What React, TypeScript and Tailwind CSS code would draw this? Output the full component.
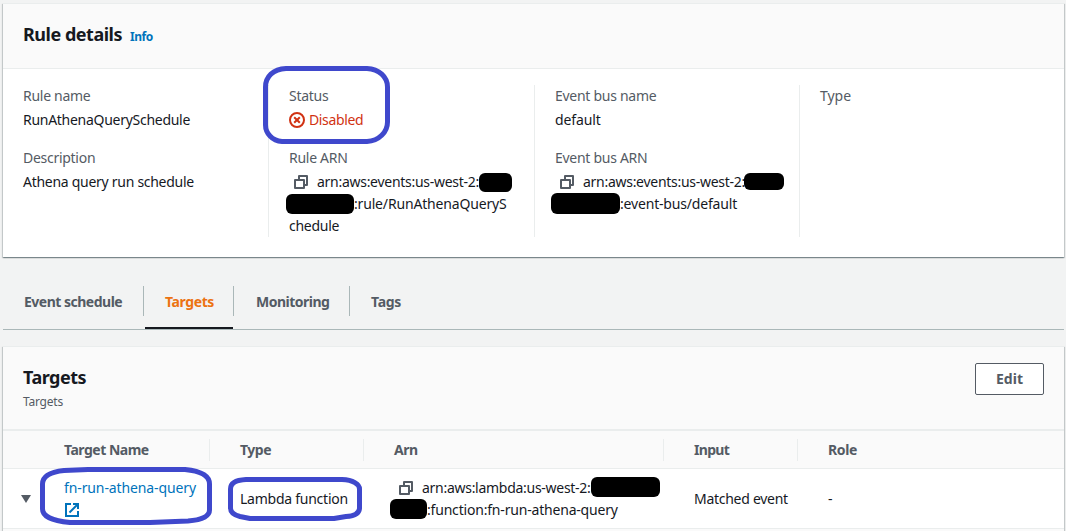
import type { ReactNode } from "react";

function CopyIcon({ className = "" }: { className?: string }) {
  return (
    <svg viewBox="0 0 16 16" className={`inline-block h-4 w-4 shrink-0 ${className}`} fill="none" stroke="#545b64" strokeWidth="2" strokeLinejoin="round">
      <path d="M2 6h9v8H2z" />
      <path d="M6 5V2h8v9h-3" />
    </svg>
  );
}

function ExternalIcon() {
  return (
    <svg viewBox="0 0 16 16" className="h-4 w-4" fill="none" stroke="#0073bb" strokeWidth="2">
      <path d="M7 2H2v12h12V9" />
      <path d="M9 2h5v5" />
      <path d="M5.500 10.500l8-8" />
    </svg>
  );
}

function DisabledIcon() {
  return (
    <svg viewBox="0 0 16 16" className="h-4 w-4 shrink-0" fill="none" stroke="#d13212" strokeWidth="2">
      <circle cx="8" cy="8" r="7" />
      <path d="M5.2 5.2l5.6 5.6M10.8 5.2l-5.6 5.6" />
    </svg>
  );
}

function Redaction({ className }: { className: string }) {
  return <span className={`absolute rounded-[6px] bg-black ${className}`} />;
}

function Field({ label, children }: { label: string; children?: ReactNode }) {
  return (
    <div>
      <div className="text-[#545b64]">{label}</div>
      <div className="mt-0.5">{children}</div>
    </div>
  );
}

function Marker({ className, box, d }: { className: string; box: string; d: string }) {
  return (
    <svg viewBox={box} className={`pointer-events-none absolute ${className}`} fill="none" stroke="#3f48cc" strokeWidth="5" strokeLinejoin="round">
      <path d={d} />
    </svg>
  );
}

function Tab({ children, className }: { children: string; className: string }) {
  return <div className={`flex h-[31px] items-center font-bold ${className}`}>{children}</div>;
}

function TabDivider() {
  return <div className="h-[30px] w-px bg-[#aab7b8]" />;
}

const cardShadow = "shadow-[0_1px_1px_0_rgba(0,28,36,0.3),1px_1px_1px_0_rgba(0,28,36,0.15),-1px_1px_1px_0_rgba(0,28,36,0.15)]";

export default function App() {
  return (
    <div className="relative h-[531px] w-[1066px] overflow-hidden whitespace-nowrap bg-[#f2f3f3] pl-[3px] pr-0.5 font-['Noto_Sans',sans-serif] text-[14px] leading-[22px] tracking-[-0.28px] text-[#16191f]">
      <section className={`mt-[3px] h-[254px] w-[1061px] border-t border-[#eaeded] bg-white ${cardShadow}`}>
        <header className="flex h-[65px] items-center border-b border-[#eaeded] bg-[#fafafa] pl-5">
          <h2 className="-translate-y-0.5 text-[18px] font-bold tracking-[-0.48px]">Rule details</h2>
          <span className="ml-2 translate-y-px text-[12px] font-bold tracking-[-0.5px] text-[#0073bb]">Info</span>
        </header>
        <div className="flex pt-4">
          <div className="flex h-[152px] w-[265px] flex-col gap-4 pl-5">
            <Field label="Rule name">RunAthenaQuerySchedule</Field>
            <Field label="Description">Athena query run schedule</Field>
          </div>
          <div className="flex h-[152px] w-[266px] flex-col gap-4 border-l border-[#eaeded] pl-5">
            <Field label="Status">
              <span className="flex items-center gap-1 text-[#d13212]">
                <DisabledIcon />
                <span className="tracking-[-0.36px]">Disabled</span>
              </span>
            </Field>
            <Field label="Rule ARN">
              <div className="relative">
                <div className="flex items-center pl-1"><CopyIcon className="mr-2" />arn:aws:events:us-west-2:</div>
                <div className="pl-[65px] tracking-[-0.17px]">:rule/RunAthenaQueryS</div>
                <div>chedule</div>
                <Redaction className="left-[190px] top-[2px] h-[19px] w-[33px]" />
                <Redaction className="left-[-3px] top-[23px] h-[20px] w-[68px]" />
              </div>
            </Field>
          </div>
          <div className="flex h-[152px] w-[265px] flex-col gap-4 border-l border-[#eaeded] pl-5">
            <Field label="Event bus name"><span className="tracking-[-0.1px]">default</span></Field>
            <Field label="Event bus ARN">
              <div className="relative">
                <div className="flex items-center pl-1"><CopyIcon className="mr-2" />arn:aws:events:us-west-2:</div>
                <div className="pl-[65px] tracking-[-0.18px]">:event-bus/default</div>
                <Redaction className="left-[189px] top-[2px] h-[17px] w-[40px]" />
                <Redaction className="left-[-4px] top-[22px] h-[21px] w-[69px]" />
              </div>
            </Field>
          </div>
          <div className="h-[152px] border-l border-[#eaeded] pl-5 tracking-[-0.04px]">
            <Field label="Type" />
          </div>
        </div>
      </section>

      <nav className="mt-[29px] flex h-[44px] w-[1061px] border-b border-[#aab7b8] tracking-[-0.5px] text-[#545b64]">
        <Tab className="w-[140px] pl-[21px]">Event schedule</Tab>
        <TabDivider />
        <div className="ml-px flex h-[43px] w-[88px] flex-col border-b-2 border-[#16191f]">
          <Tab className="pl-5 tracking-[-0.4px] text-[#ec7211]">Targets</Tab>
        </div>
        <TabDivider />
        <Tab className="w-[115px] pl-[22px]">Monitoring</Tab>
        <TabDivider />
        <Tab className="pl-[21px] tracking-[-0.31px]">Tags</Tab>
      </nav>

      <section className={`mt-4 h-[190px] w-[1061px] border-t border-[#eaeded] bg-white ${cardShadow}`}>
        <header className="flex h-[84px] justify-between border-b-2 border-[#eaeded] bg-[#fafafa] pl-5 pr-5">
          <div className="pt-[19px]">
            <h2 className="text-[18px] font-bold tracking-[-0.51px]">Targets</h2>
            <p className="mt-[5px] text-[12px] leading-[18px] tracking-[-0.22px] text-[#545b64]">Targets</p>
          </div>
          <button className="mt-4 h-8 w-[69px] rounded-[2px] border border-[#545b64] bg-white font-bold tracking-normal text-[#545b64]">Edit</button>
        </header>
        <div className="flex h-[38px] items-center border-b border-[#eaeded] bg-[#fafafa] font-bold tracking-[-0.5px] text-[#545b64]">
          <div className="w-[206px] pl-[61px]">Target Name</div>
          <div className="w-[154px] border-l border-[#eaeded] pl-[30px]">Type</div>
          <div className="w-[300px] border-l border-[#eaeded] pl-[30px]">Arn</div>
          <div className="w-[134px] border-l border-[#eaeded] pl-[30px] tracking-[-0.7px]">Input</div>
          <div className="border-l border-[#eaeded] pl-[30px] tracking-[-0.37px]">Role</div>
        </div>
        <div className="flex h-[60px] items-center border-b border-[#eaeded]">
          <svg viewBox="0 0 10 8" className="ml-[18px] h-2 w-2.5 fill-[#545b64]"><path d="M0 0h10L5 8z" /></svg>
          <div className="ml-[33px] w-[176px] tracking-[-0.11px] text-[#0073bb]">
            <div>fn-run-athena-query</div>
            <div className="flex h-[22px] items-center"><ExternalIcon /></div>
          </div>
          <div className="w-[154px] tracking-[-0.25px]">Lambda function</div>
          <div className="relative w-[300px]">
            <div className="flex items-center pl-1"><CopyIcon className="mr-2" />arn:aws:lambda:us-west-2:</div>
            <div className="pl-[33px] tracking-[-0.19px]">:function:fn-run-athena-query</div>
            <Redaction className="left-[197px] top-0 h-[20px] w-[69px]" />
            <Redaction className="left-[-4px] top-[22px] h-[20px] w-[37px]" />
          </div>
          <div className="w-[134px]">Matched event</div>
          <div>-</div>
        </div>
        <div className="h-2 bg-[#fafafa]" />
      </section>

      <Marker
        className="left-[263px] top-[66px] h-[78px] w-[127px]"
        box="0 0 127 78"
        d="M23 2.5H104C116 3 124.500 11 124.500 21V56C124.500 66 116 75 104 75.500H19C9 75 2.500 67 2.500 59V21C2.500 11 10 3 23 2.500Z"
      />
      <Marker
        className="left-[40px] top-[467px] h-[58px] w-[172px]"
        box="0 0 172 58"
        d="M24 3.500L48 2.500H145C160 4 169.500 8 169.500 17V43C169.500 50 160 53 148 54L110 55.500H30C12 54 2.500 49 2.500 42V17C2.500 10 10 5 24 3.500Z"
      />
      <Marker
        className="left-[228px] top-[477px] h-[44px] w-[134px]"
        box="0 0 134 44"
        d="M18 2.500H114C125 3 131.500 7 131.500 12V31C131.500 36 127 39 118 39.500L106 41.500H22L12 39.500C6 38 2.500 35 2.500 31V12C2.500 6 8 3 18 2.500Z"
      />
    </div>
  );
}
